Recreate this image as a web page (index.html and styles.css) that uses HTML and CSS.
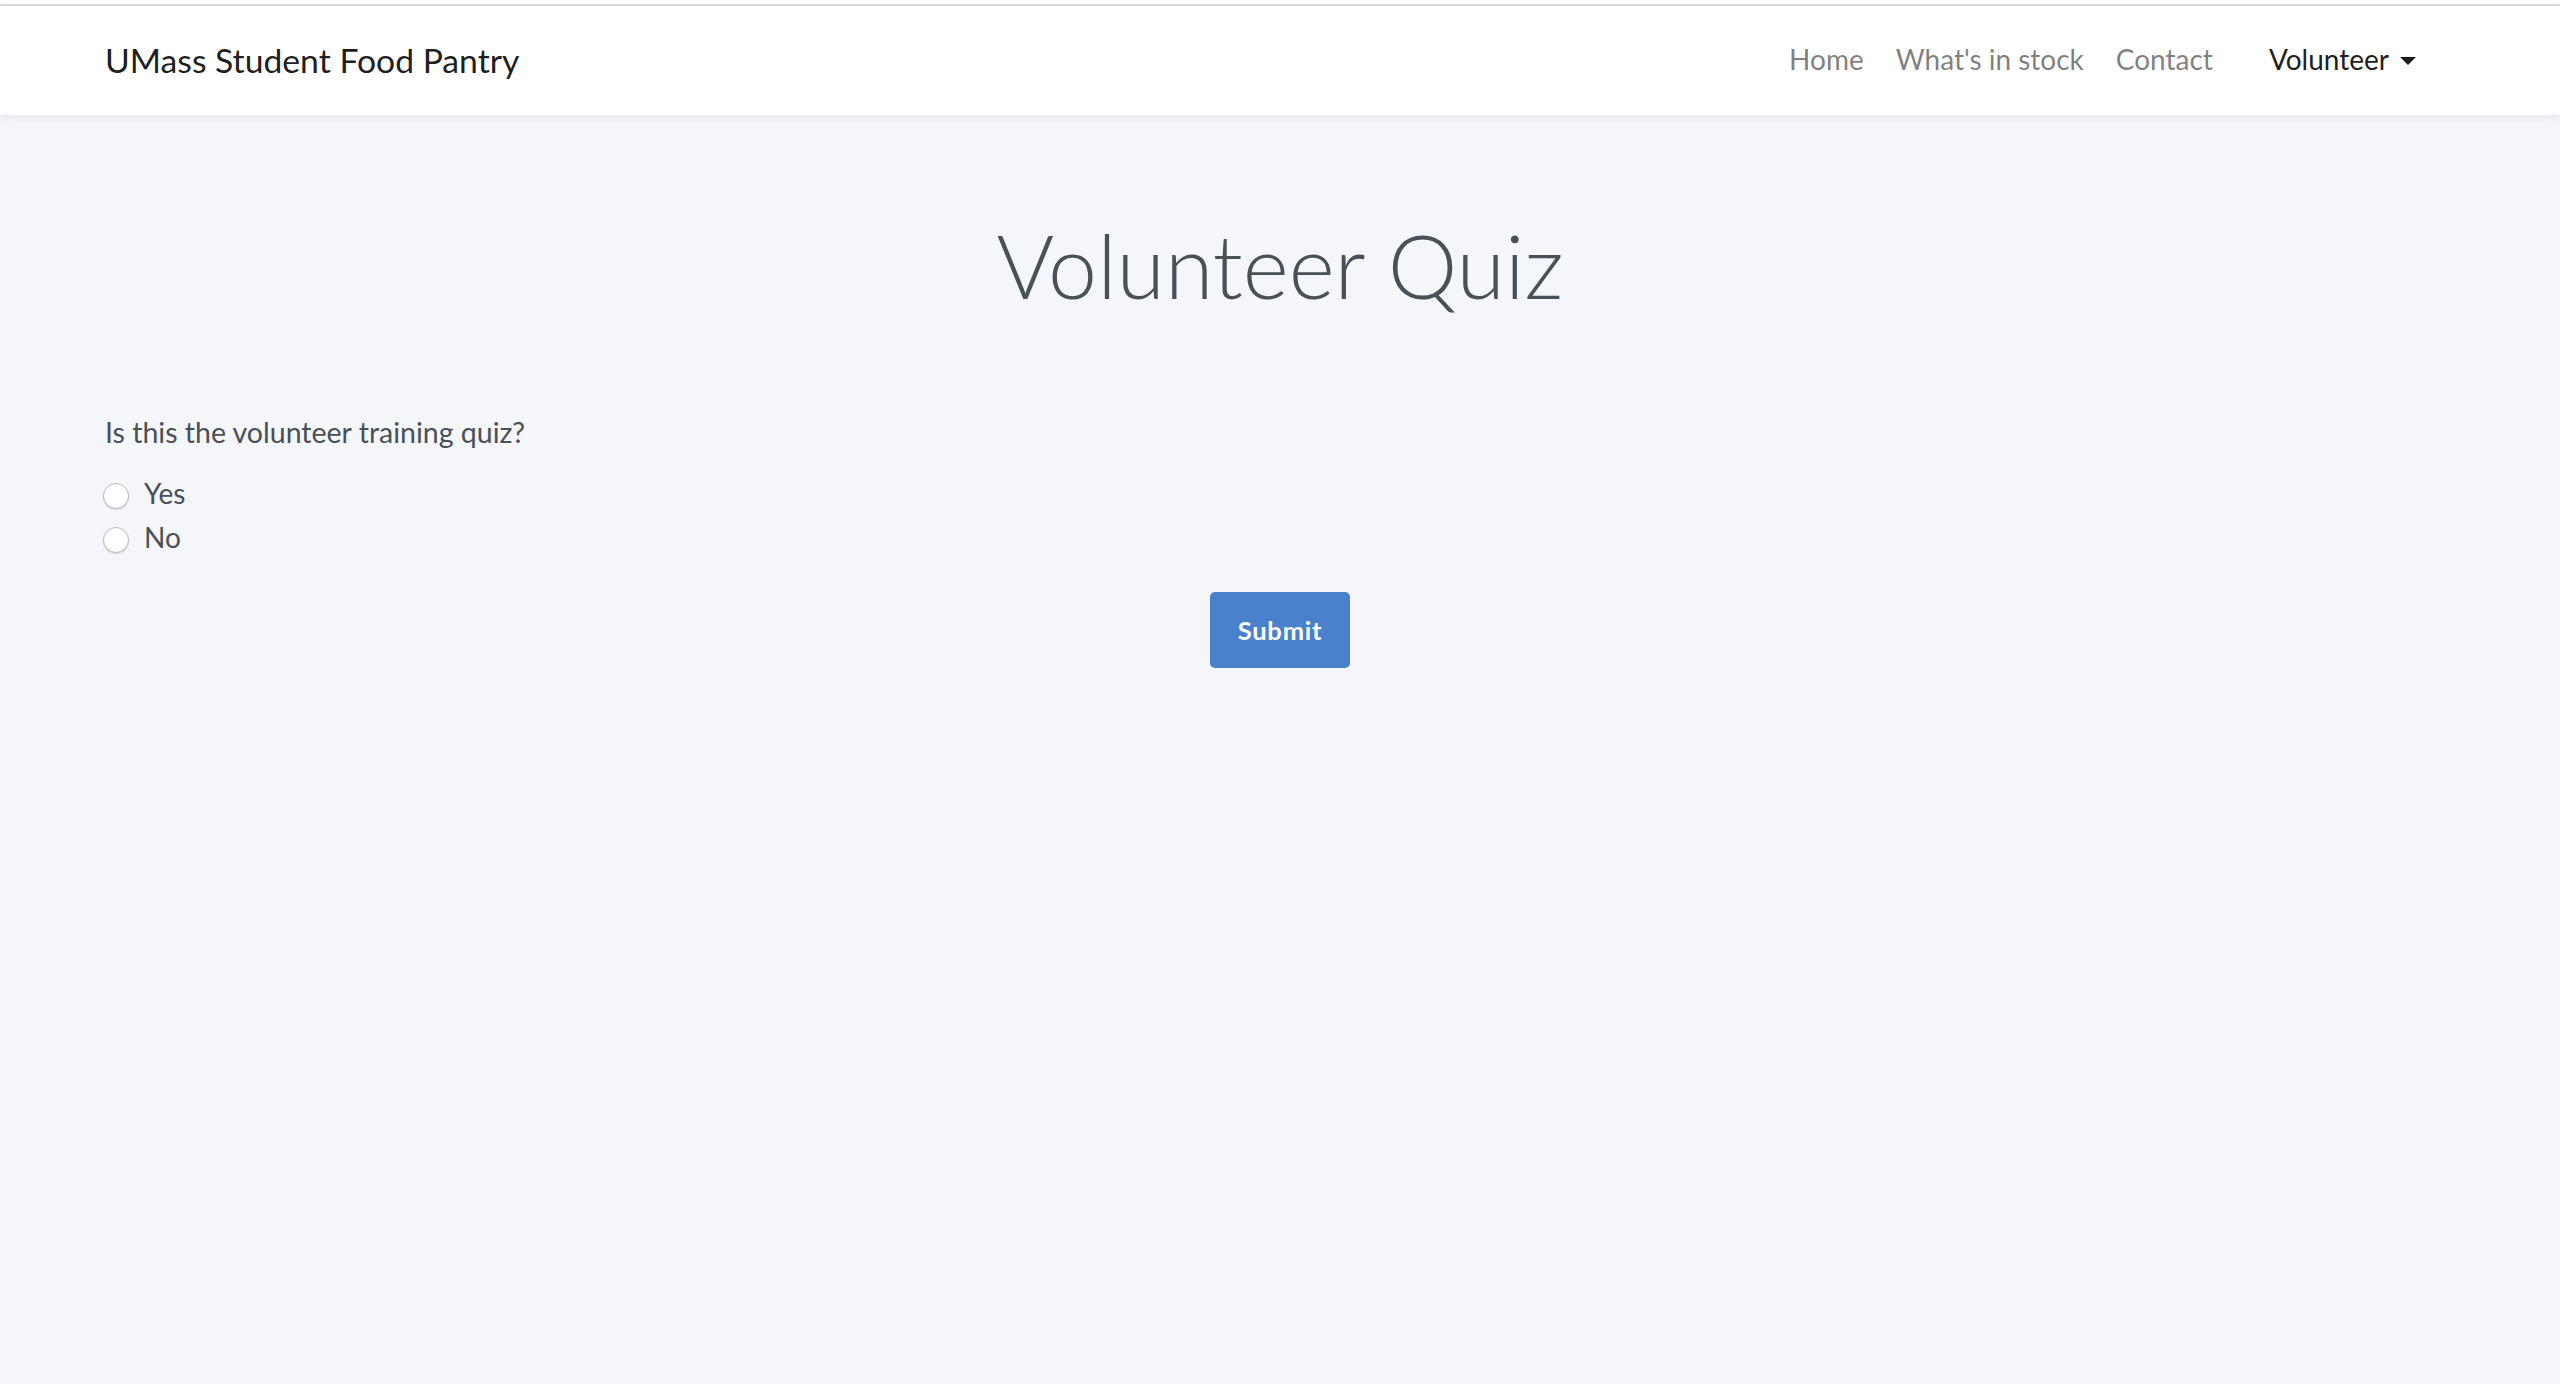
FILE: index.html
```html
<!DOCTYPE html>
<html lang="en">
<head>
<meta charset="utf-8">
<title>Volunteer Quiz - UMass Student Food Pantry</title>
<link rel="stylesheet" href="styles.css">
</head>
<body>
<div class="topline"></div>
<nav class="navbar">
  <a class="brand" href="#">UMass Student Food Pantry</a>
  <ul class="nav">
    <li><a class="nav-link" href="#">Home</a></li>
    <li><a class="nav-link" href="#">What's in stock</a></li>
    <li><a class="nav-link" href="#">Contact</a></li>
  </ul>
  <ul class="nav nav-right">
    <li><a class="nav-link active" href="#">Volunteer<span class="caret"></span></a></li>
  </ul>
</nav>
<main class="main">
  <h1 class="title">Volunteer Quiz</h1>
  <form class="quiz">
    <p class="question">Is this the volunteer training quiz?</p>
    <label class="option"><input type="radio" name="q1" class="radio"><span>Yes</span></label>
    <label class="option"><input type="radio" name="q1" class="radio"><span>No</span></label>
    <div class="actions"><button type="button" class="btn">Submit</button></div>
  </form>
</main>
</body>
</html>
```
FILE: styles.css
```css
html, body {
  margin: 0;
  padding: 0;
}
body {
  background: #f5f6fa;
  font-family: Lato, "Noto Sans", sans-serif;
  font-size: 28px;
  line-height: 42px;
  color: #495057;
  min-height: 1384px;
}
.topline {
  height: 4px;
  background: #ffffff;
  border-bottom: 2px solid #dcdcdf;
}
.navbar {
  position: relative;
  z-index: 1;
  height: 109px;
  background: #ffffff;
  display: flex;
  align-items: center;
  padding: 0 0 4px 105px;
  box-sizing: border-box;
  box-shadow: 0 2px 8px rgba(0, 0, 0, 0.08);
}
.brand {
  font-size: 33.7px;
  color: rgba(0, 0, 0, 0.9);
  text-decoration: none;
  margin-top: 2px;
}
.nav {
  list-style: none;
  margin: 0;
  padding: 0;
  display: flex;
}
.nav:first-of-type {
  margin-left: auto;
}
.nav-right {
  margin-left: 24px;
  margin-right: 128px;
}
.nav-link {
  display: block;
  padding: 0 16px;
  color: rgba(0, 0, 0, 0.5);
  text-decoration: none;
  font-size: 28px;
}
.nav-link.active {
  color: rgba(0, 0, 0, 0.9);
}
.caret {
  display: inline-block;
  margin-left: 11px;
  vertical-align: 5px;
  border-top: 8px solid #1a1a1a;
  border-left: 8px solid transparent;
  border-right: 8px solid transparent;
}
.main {
  padding: 98px 105px 0;
}
.title {
  margin: 0;
  text-align: center;
  font-weight: 300;
  font-size: 88px;
  line-height: 1.2;
  color: #495057;
}
.quiz {
  margin-top: 92px;
}
.question {
  margin: 0 0 18px;
  font-size: 28.5px;
}
.option {
  display: flex;
  align-items: center;
  height: 44px;
  gap: 15px;
}
.radio {
  appearance: none;
  -webkit-appearance: none;
  margin: 6px 0 0 -2px;
  width: 26px;
  height: 26px;
  border-radius: 50%;
  background: #ffffff;
  border: 1.5px solid #b9b9bd;
  box-shadow: 0 1px 1px rgba(0, 0, 0, 0.12);
  box-sizing: border-box;
}
.actions {
  display: flex;
  justify-content: center;
  margin-top: 33px;
}
.btn {
  width: 140px;
  height: 76px;
  border: none;
  border-radius: 5px;
  background: #4a81cc;
  color: #ffffff;
  font-family: Lato, "Noto Sans", sans-serif;
  font-weight: 700;
  font-size: 25.5px;
  letter-spacing: 0.8px;
}
```
